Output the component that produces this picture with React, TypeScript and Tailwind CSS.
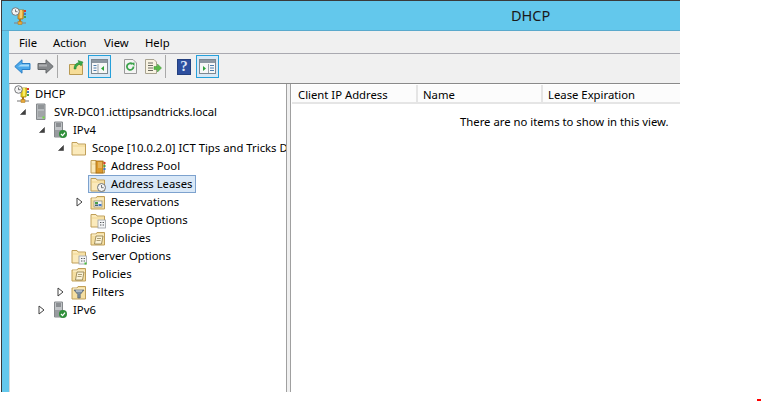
import type { ReactNode } from "react";

const FONT = "font-['Noto_Sans','Open_Sans',sans-serif]";

function Trophy({ big }: { big?: boolean }) {
  return (
    <svg width={16} height={18} viewBox="0 0 16 18" className="shrink-0">
      <path d="M7 3h6l-1 9H7z" fill={big ? "#e8a93a" : "#e8d020"} stroke={big ? "#a8751d" : "#a39318"} strokeWidth={0.8} />
      <path d="M9 3h2v8H9z" fill={big ? "#f6cf70" : "#f7ec6a"} />
      <rect x={13} y={3} width={2} height={2} fill="#d33b2f" />
      <rect x={13} y={6} width={2} height={2} fill="#3f78c9" />
      <rect x={13} y={9} width={2} height={2} fill="#4aa04a" />
      <circle cx={4.5} cy={4.5} r={3.8} fill="#f4f4f4" stroke="#77797c" />
      <path d="M4.5 2.5v2.2H6.5" fill="none" stroke="#55585c" strokeWidth={0.8} />
      <path d="M9 12v3" stroke="#a8751d" strokeWidth={2} />
      <path d="M3 16h12" stroke="#8a8a8a" strokeWidth={1.2} />
      <rect x={7} y={14.5} width={4} height={3} fill="#e8a93a" stroke="#a8751d" strokeWidth={0.5} />
    </svg>
  );
}

function Server({ check }: { check?: boolean }) {
  if (!check) {
    return (
      <svg width={16} height={18} viewBox="0 0 16 18" className="shrink-0">
        <path d="M3.5 1h8.5v15.5H3.5z" fill="#b5b9bc" stroke="#85898c" />
        <path d="M5 3h6M5 5h6" stroke="#6d7174" />
        <path d="M5 8h6v6H5z" fill="#a1a5a8" />
        <rect x={9.5} y={13.5} width={2} height={2} fill="#6fdc3c" />
      </svg>
    );
  }
  return (
    <svg width={16} height={18} viewBox="0 0 16 18" className="shrink-0">
      <path d="M2.5 1h8v15h-8z" fill="#c2c5c8" stroke="#85898c" />
      <path d="M4 3h5M4 5h5" stroke="#55595c" />
      <path d="M3 9h7v7H3z" fill="#989c9f" />
      <circle cx={11} cy={13} r={4} fill="#2f8f3a" />
      <path d="M9 13l1.6 1.6L13 11.6" fill="none" stroke="#fff" strokeWidth={1.2} />
    </svg>
  );
}

function Folder({ children, closed }: { children?: ReactNode; closed?: boolean }) {
  return (
    <svg width={16} height={18} viewBox="0 0 16 18" className="shrink-0">
      {closed ? (
        <>
          <path d="M1 5h5l1-1.500h7.500V16H1z" fill="#f5dfa2" stroke="#c09f58" />
          <path d="M2 6h12" stroke="#fdf3d4" />
        </>
      ) : (
        <>
          <path d="M1 3.500h5l1 1.500h7.500v11H1z" fill="#fbeabb" stroke="#c09f58" />
          <path d="M2 6.500h12v1H2z" fill="#f1d68f" />
        </>
      )}
      {children}
    </svg>
  );
}

const Notebook = () => (
  <>
    <rect x={6} y={4} width={7} height={12} fill="#dd9a2c" stroke="#a16a14" strokeWidth={0.8} />
    <path d="M8 6h4M8 8h4M8 10h4" stroke="#f7dca0" strokeWidth={0.8} />
    <rect x={13.5} y={5} width={2} height={2} fill="#d33b2f" />
    <rect x={13.5} y={8} width={2} height={2} fill="#4aa04a" />
    <rect x={13.5} y={11} width={2} height={2} fill="#3f78c9" />
  </>
);

const Clock = () => (
  <>
    <circle cx={11.5} cy={12.5} r={4} fill="#f3f4f5" stroke="#6f7376" />
    <path d="M11.500 10v2.700h2.200" fill="none" stroke="#55585c" strokeWidth={0.8} />
  </>
);

const Reservation = () => (
  <>
    <rect x={4} y={8} width={8} height={6} fill="#f4f4f0" stroke="#8a8a80" strokeWidth={0.7} />
    <rect x={5} y={9} width={3} height={2} fill="#4aa04a" />
    <rect x={8.5} y={11} width={3} height={2} fill="#3f78c9" />
    <rect x={5} y={11.5} width={3} height={1.5} fill="#46606f" />
  </>
);

const OptionsDoc = ({ led }: { led?: boolean }) => (
  <>
    <rect x={8} y={9} width={7.5} height={8} fill="#f5f6f7" stroke="#9a9ea2" strokeWidth={0.8} />
    <path d="M10 11.500h1.400M12.600 11.500H14M10 14h1.400M12.600 14H14" stroke="#55595c" strokeWidth={1} />
    {led && <rect x={13.5} y={15.5} width={2} height={2} fill="#46c03a" />}
  </>
);

const Scroll = () => (
  <>
    <path d="M6 7h7l-1.500 8H4.500z" fill="#fbf3d8" stroke="#8b7a4a" strokeWidth={0.8} />
    <path d="M7 9.500h4M6.500 11.500h4" stroke="#8b7a4a" strokeWidth={0.7} />
  </>
);

const Funnel = () => (
  <>
    <path d="M3 7h10l-3.800 4.500V15H6.800v-3.500z" fill="#7d8f9f" stroke="#56626d" strokeWidth={0.7} />
    <path d="M5 8h6" stroke="#dfe6ec" />
  </>
);

interface TreeRow {
  label: string;
  level: number;
  arrow?: "open" | "closed";
  icon: ReactNode;
  selected?: boolean;
}

const ROWS: TreeRow[] = [
  { label: "DHCP", level: 0, icon: <Trophy /> },
  { label: "SVR-DC01.icttipsandtricks.local", level: 1, arrow: "open", icon: <Server /> },
  { label: "IPv4", level: 2, arrow: "open", icon: <Server check /> },
  { label: "Scope [10.0.2.0] ICT Tips and Tricks DHCP Scope", level: 3, arrow: "open", icon: <Folder /> },
  { label: "Address Pool", level: 4, icon: <Folder><Notebook /></Folder> },
  { label: "Address Leases", level: 4, icon: <Folder><Clock /></Folder>, selected: true },
  { label: "Reservations", level: 4, arrow: "closed", icon: <Folder closed><Reservation /></Folder> },
  { label: "Scope Options", level: 4, icon: <Folder><OptionsDoc /></Folder> },
  { label: "Policies", level: 4, icon: <Folder closed><Scroll /></Folder> },
  { label: "Server Options", level: 3, icon: <Folder><OptionsDoc led /></Folder> },
  { label: "Policies", level: 3, icon: <Folder closed><Scroll /></Folder> },
  { label: "Filters", level: 3, arrow: "closed", icon: <Folder closed><Funnel /></Folder> },
  { label: "IPv6", level: 2, arrow: "closed", icon: <Server check /> },
];

const INDENT = ["pl-[3px]", "pl-[3px]", "pl-[22px]", "pl-[41px]", "pl-[60px]"];

function Arrow({ kind }: { kind?: "open" | "closed" }) {
  return (
    <span className="w-[19px] h-[18px] shrink-0 flex items-center justify-center">
      {kind === "open" && (
        <svg width={8} height={8} viewBox="0 0 8 8">
          <path d="M6.500 1.500v5h-5z" fill="#404040" stroke="#404040" strokeWidth={0.6} />
        </svg>
      )}
      {kind === "closed" && (
        <svg width={7} height={10} viewBox="0 0 7 10">
          <path d="M1 1l5 4-5 4z" fill="#fff" stroke="#404040" />
        </svg>
      )}
    </span>
  );
}

function Tree() {
  return (
    <div className="w-[278px] shrink-0 bg-white border-r border-r-[#a0a0a0] border-l border-l-[#d8d8d8] overflow-hidden pt-px">
      {ROWS.map((row, i) => (
        <div key={i} className={`flex items-center h-[18px] whitespace-nowrap ${INDENT[row.level]}`}>
          {row.level > 0 && <Arrow kind={row.arrow} />}
          <div
            className={`flex items-center h-[18px] pl-px pr-[2px] border gap-[5px] -ml-px ${
              row.selected ? "bg-[#d9e8f7] border-[#7da2ce]" : "border-transparent"
            }`}
          >
            {row.icon}
            <span className="text-[11.3px] leading-none text-black">{row.label}</span>
          </div>
        </div>
      ))}
    </div>
  );
}

function ToolBox({ children }: { children: ReactNode }) {
  return (
    <div className="w-[23px] h-[23px] shrink-0 border border-[#26a0da] bg-[#d8e8f5] flex items-center justify-center">
      {children}
    </div>
  );
}

function PanelIcon({ right }: { right?: boolean }) {
  return (
    <svg width={17} height={15} viewBox="0 0 17 15">
      <rect x={0.5} y={0.5} width={16} height={14} fill="#f7f7f7" stroke="#7d8790" />
      <rect x={1} y={1} width={15} height={3} fill="#8d98a2" />
      {right ? (
        <>
          <path d="M4 7l3 2.500L4 12z" fill="#2fa33a" />
          <path d="M11 6.500h4M11 9h4M11 11.500h4" stroke="#4d7fae" />
          <path d="M9.500 5v9" stroke="#9aa3aa" />
        </>
      ) : (
        <>
          <path d="M2.500 6.500h3M2.500 9h3M2.500 11.500h3" stroke="#4d7fae" />
          <path d="M7 5v9" stroke="#9aa3aa" />
          <path d="M13 7l-3 2.500 3 2.500z" fill="#2fa33a" />
        </>
      )}
    </svg>
  );
}

function Toolbar() {
  return (
    <div className="h-[29px] bg-[#f0f0f0] flex items-center pl-[5px] pb-[4px]">
      <svg width={17} height={15} viewBox="0 0 17 15" className="shrink-0">
        <path d="M8 .8L.8 7.500 8 14.200V10.500h8V4.500H8z" fill="#4aa8ea" stroke="#2b7fc6" />
        <path d="M7 5.500h8v2H4z" fill="#a9dcf9" />
      </svg>
      <svg width={17} height={15} viewBox="0 0 17 15" className="shrink-0 ml-[6px]">
        <path d="M9 .8L16.200 7.500 9 14.200V10.500H1V4.500h8z" fill="#85888b" stroke="#636669" />
        <path d="M2 5.500h8v2H2z" fill="#aeb0b2" />
      </svg>
      <div className="w-px h-[23px] bg-[#a9a9a9] shrink-0 ml-[3px]" />
      <svg width={15} height={16} viewBox="0 0 15 16" className="shrink-0 ml-[11px]">
        <path d="M.5 5.500h13v10H.5z" fill="#f6dd98" stroke="#b99a52" />
        <path d="M5 10c0-4 2-6 5-6.500L9 1.500l5 1.500-2 4-1-1.800C8 6 7 8 7 10z" fill="#38a848" stroke="#20802e" strokeWidth={0.5} />
      </svg>
      <div className="ml-[4px]">
        <ToolBox><PanelIcon /></ToolBox>
      </div>
      <svg width={13} height={15} viewBox="0 0 13 15" className="shrink-0 ml-[13px]">
        <path d="M.5.500h8.500l3.500 3.500v10.500H.5z" fill="#f4f4f4" stroke="#9a9a9a" />
        <path d="M9.500 7.500a3.300 3.300 0 1 1-1-2.300" fill="none" stroke="#3da44d" strokeWidth={1.8} />
        <path d="M7 4l3.500-.5V7z" fill="#3da44d" />
      </svg>
      <svg width={17} height={15} viewBox="0 0 17 15" className="shrink-0 ml-[8px]">
        <path d="M.5.500h8.500l2.500 2.500v11.500H.5z" fill="#f8f3e2" stroke="#a8a390" />
        <path d="M3 4h5M3 6.500h5M3 9h5M3 11.500h5" stroke="#6a6a60" />
        <path d="M9 7.500h3.500V5l4 4-4 4v-2.500H9z" fill="#58b948" stroke="#3d9433" strokeWidth={0.5} />
      </svg>
      <div className="w-px h-[23px] bg-[#a9a9a9] shrink-0 ml-[3px]" />
      <div className="w-[14px] h-[16px] shrink-0 ml-[11px] bg-[#2e4f9f] border border-[#24407f] flex items-center justify-center text-[#dfe6f7] text-[15px] leading-none font-bold font-['Liberation_Serif',serif]">
        ?
      </div>
      <div className="ml-[5px]">
        <ToolBox><PanelIcon right /></ToolBox>
      </div>
    </div>
  );
}

function ListPane() {
  return (
    <div className="flex-1 min-w-0 bg-white border-l border-l-[#a0a0a0] pt-px pl-px overflow-hidden">
      <div className="flex h-[19px] bg-[#fcfcfc] border-b-2 border-b-[#e5e5e5] text-[11.3px] text-black leading-none whitespace-nowrap">
        <div className="w-[126px] pl-[6px] pt-[2px] flex items-center border-r-2 border-r-[#e5e5e5]">Client IP Address</div>
        <div className="w-[125px] pl-[5px] pt-[2px] flex items-center border-r-2 border-r-[#e5e5e5]">Name</div>
        <div className="flex-1 pl-[5px] pt-[2px] flex items-center">Lease Expiration</div>
      </div>
      <div className="pl-[168px] pt-[10px] text-[11.3px] leading-[16px] text-black whitespace-nowrap">
        There are no items to show in this view.
      </div>
    </div>
  );
}

export default function App() {
  return (
    <div className={`relative w-[761px] h-[401px] bg-white overflow-hidden ${FONT}`}>
      <div className="w-[679px] h-[392px] flex flex-col border-t border-t-[#3a3a3a] border-l border-l-[#3a3a3a] ml-px bg-[#63c8ec]">
        <div className="h-[30px] shrink-0 flex items-center pl-[9px] border-b border-b-[#5aa9cc]">
          <Trophy big />
          <span className="ml-[484px] text-[14.5px] leading-none text-[#1a1a1a]">DHCP</span>
        </div>
        <div className="flex-1 min-h-0 ml-[7px] flex flex-col bg-[#f0f0f0]">
          <div className="h-[21px] shrink-0 flex items-center pl-[10px] pt-px text-[11.3px] leading-none text-black border-b border-b-[#a9a9b0] box-content">
            <span className="w-[34px]">File</span>
            <span className="w-[51px]">Action</span>
            <span className="w-[41px]">View</span>
            <span>Help</span>
          </div>
          <Toolbar />
          <div className="flex-1 min-h-0 flex border-t border-t-[#8a8a8a]">
            <Tree />
            <div className="w-[3px] shrink-0 bg-[#f0f0f0]" />
            <ListPane />
          </div>
        </div>
      </div>
      <div className="absolute left-[757px] top-[399px] w-[4px] h-[2px] bg-[#ff0000]" />
    </div>
  );
}
